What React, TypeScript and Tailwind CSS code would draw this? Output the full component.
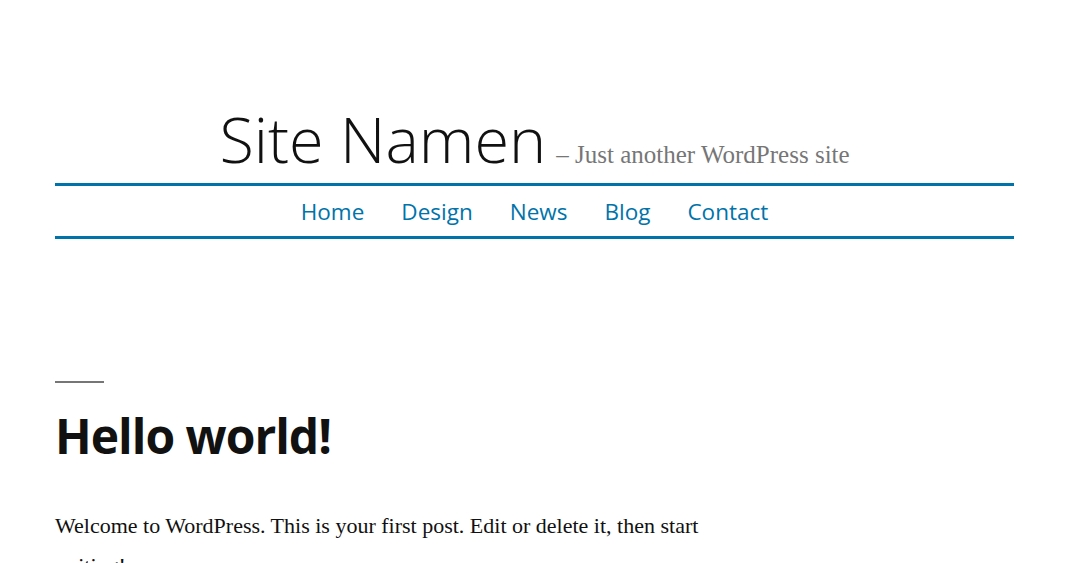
const navItems = ['Home', 'Design', 'News', 'Blog', 'Contact'];

const sans = "font-['Open_Sans','Noto_Sans',sans-serif]";
const serif = "font-['Liberation_Serif','Times_New_Roman',serif]";

export default function App() {
  return (
    <div className="min-h-screen bg-white overflow-hidden">
      <div className="ml-[55px] w-[959px]">
        {/* header */}
        <header className="pt-[107px]">
          <div className="flex items-baseline justify-center">
            <h1 className={`${sans} text-[63px] leading-none font-light text-[#111111]`}>
              Site Namen
            </h1>
            <p className={`${serif} ml-[10px] text-[25px] leading-none text-[#767676]`}>
              – Just another WordPress site
            </p>
          </div>
          <nav className="mt-[13px] border-y-[3px] border-[#0073aa] h-[56px] pt-[3px] pb-[1px]">
            <ul className={`${sans} flex justify-center gap-[37px] text-[22.5px] leading-[46px] text-[#0073aa]`}>
              {navItems.map(item => (
                <li key={item}>
                  <a href="#">{item}</a>
                </li>
              ))}
            </ul>
          </nav>
        </header>

        {/* post */}
        <article className="mt-[142px]">
          <div className="w-[49px] h-[2px] bg-[#767676]" />
          <h2 className={`${sans} mt-[29px] text-[48px] leading-none font-bold text-[#111111] tracking-[-1px]`}>
            Hello world!
          </h2>
          <p className={`${serif} mt-[46px] max-w-[680px] text-[22px] leading-[40px] text-[#111111]`}>
            Welcome to WordPress. This is your first post. Edit or delete it, then start writing!
          </p>
        </article>
      </div>
    </div>
  );
}
